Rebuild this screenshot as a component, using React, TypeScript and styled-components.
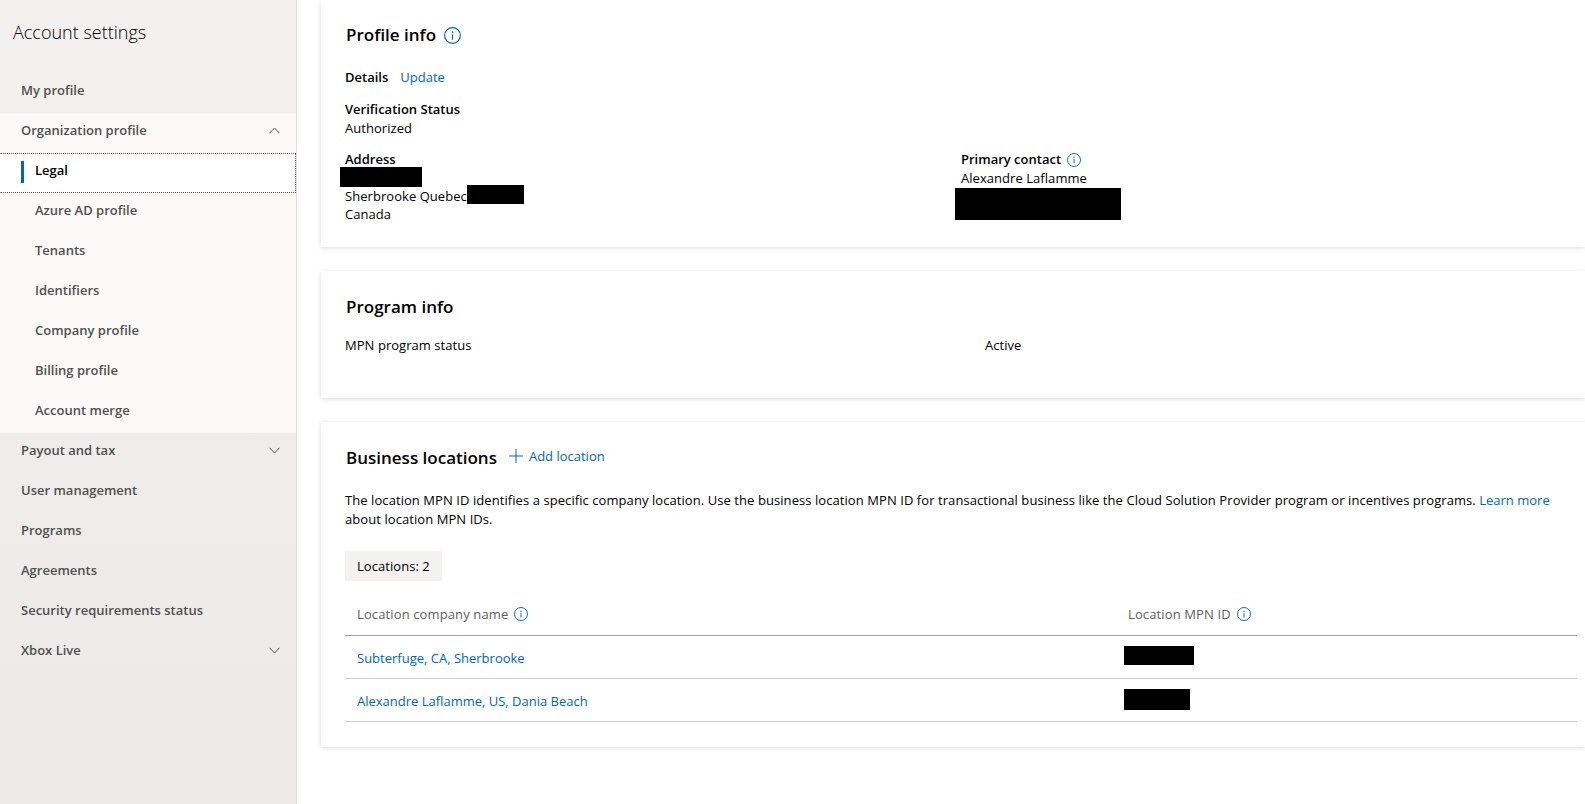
import styled, { createGlobalStyle } from "styled-components";

const GlobalStyle = createGlobalStyle`
  html, body {
    margin: 0;
    padding: 0;
    background: #fff;
    overflow: hidden;
  }
  body {
    font-family: "Open Sans", "Liberation Sans", sans-serif;
    font-size: 13px;
    line-height: 19px;
    letter-spacing: 0.05px;
    color: #000;
  }
`;

const Page = styled.div`
  display: flex;
  height: 804px;
  overflow: hidden;
`;

const Sidebar = styled.nav`
  width: 296px;
  flex-shrink: 0;
  border-right: 1px solid #e1e0df;
  background: linear-gradient(#f2f1f0, #ebeae8);
  letter-spacing: 0;
`;

const SidebarTitle = styled.div`
  height: 73px;
  box-sizing: border-box;
  padding: 20px 0 0 13px;
  font-size: 18px;
  font-weight: 300;
  line-height: 24px;
  color: #000;
`;

const NavGroup = styled.div`
  background: #faf9f8;
`;

const NavItem = styled.div<{ $sub?: boolean; $active?: boolean }>`
  position: relative;
  height: 40px;
  box-sizing: border-box;
  display: flex;
  align-items: center;
  justify-content: space-between;
  padding: 0 16px 6px ${(p) => (p.$sub ? "35px" : "21px")};
  font-weight: 600;
  color: ${(p) => (p.$active ? "#000" : "#505050")};
  background: ${(p) => (p.$active ? "#fff" : "transparent")};
  border: ${(p) => (p.$active ? "1px dotted #555" : "none")};
  ${(p) => p.$active && "padding-left: 34px; border-left-color: transparent;"}
`;

const ActiveBar = styled.span`
  position: absolute;
  left: 20px;
  top: 7px;
  width: 3px;
  height: 22px;
  background: #0067b8;
`;

const Chevron = ({ up }: { up?: boolean }) => (
  <svg width="11" height="7" viewBox="0 0 11 7" fill="none">
    <path
      d={up ? "M0.5 6.2L5.5 1L10.5 6.2" : "M0.5 0.8L5.5 6L10.5 0.8"}
      stroke="#555"
      strokeWidth="1"
    />
  </svg>
);

const Main = styled.main`
  flex: 1;
  min-width: 0;
  padding-left: 24px;
`;

const Card = styled.section<{ $height: number; $top: number }>`
  height: ${(p) => p.$height}px;
  box-sizing: border-box;
  margin-bottom: 24px;
  padding: ${(p) => p.$top}px 8px 0 24px;
  background: #fff;
  box-shadow: 0 1px 5px rgba(0, 0, 0, 0.13);
`;

const TitleRow = styled.div`
  display: flex;
  align-items: center;
`;

const CardTitle = styled.h2`
  margin: 0;
  padding-left: 1px;
  font-size: 17px;
  font-weight: 600;
  line-height: 24px;
  letter-spacing: 0;
  color: #000;
`;

const Link = styled.a`
  color: #0067b8;
  text-decoration: none;
  letter-spacing: 0;
`;

const InfoMark = styled.svg<{ $left: number }>`
  margin-left: ${(p) => p.$left}px;
  flex-shrink: 0;
`;

const InfoIcon = ({ size = 14, left = 6 }: { size?: number; left?: number }) => (
  <InfoMark $left={left} width={size} height={size} viewBox="0 0 16 16" fill="none">
    <circle cx="8" cy="8" r="7.4" stroke="#0067b8" strokeWidth="1.1" />
    <path d="M8 7V12" stroke="#0067b8" strokeWidth="1.1" />
    <circle cx="8" cy="4.8" r="0.8" fill="#0067b8" />
  </InfoMark>
);

const DetailsRow = styled.div`
  display: flex;
  gap: 12px;
  margin-top: 21px;
`;

const Strong = styled.div`
  font-weight: 600;
  letter-spacing: 0;
  color: #000;
`;

const Columns = styled.div`
  display: grid;
  grid-template-columns: 616px 1fr;
`;

const Block = styled.div<{ $top: number }>`
  margin-top: ${(p) => p.$top}px;
`;

const LabelRow = styled.div`
  display: flex;
  align-items: center;
`;

const Redacted = styled.div<{ $w: number; $h: number; $left: number; $up?: number }>`
  width: ${(p) => p.$w}px;
  height: ${(p) => p.$h}px;
  margin-left: ${(p) => p.$left}px;
  margin-top: ${(p) => p.$up ?? 0}px;
  background: #000;
`;

const InlineRow = styled.div`
  display: flex;
  align-items: flex-start;
  height: 18px;
`;

const ProgramRow = styled.div`
  display: grid;
  grid-template-columns: 640px 1fr;
  margin-top: 17px;
`;

const AddButton = styled(Link)`
  display: flex;
  align-items: center;
  margin: 0 0 4px 12px;
  gap: 6px;
`;

const Paragraph = styled.p`
  margin: 21px 0 0;
  line-height: 18.67px;
  letter-spacing: 0.07px;
  color: #000;
`;

const CountChip = styled.div`
  width: 97px;
  height: 30px;
  box-sizing: border-box;
  margin-top: 23px;
  padding-left: 12px;
  display: flex;
  align-items: center;
  background: #f3f2f1;
`;

const Table = styled.div`
  margin-top: 12px;
`;

const TableRow = styled.div<{ $head?: boolean }>`
  display: grid;
  grid-template-columns: 771px 1fr;
  height: 43px;
  box-sizing: border-box;
  align-items: center;
  border-bottom: 1px solid ${(p) => (p.$head ? "#a3a3a3" : "#d0d0d0")};
`;

const HeadCell = styled.div`
  display: flex;
  align-items: center;
  padding-left: 12px;
  letter-spacing: 0.12px;
  color: #605e5c;
`;

const BodyCell = styled.div`
  padding: 2px 0 0 12px;
`;

const RedactedCell = styled.div`
  display: flex;
  align-items: center;
`;

const topItems = ["My profile"];
const subItems = [
  "Azure AD profile",
  "Tenants",
  "Identifiers",
  "Company profile",
  "Billing profile",
  "Account merge",
];

const App = () => {
  return (
    <>
      <GlobalStyle />
      <Page>
        <Sidebar>
          <SidebarTitle>Account settings</SidebarTitle>
          {topItems.map((item) => (
            <NavItem key={item}>{item}</NavItem>
          ))}
          <NavGroup>
            <NavItem>
              Organization profile
              <Chevron up />
            </NavItem>
            <NavItem $sub $active>
              <ActiveBar />
              Legal
            </NavItem>
            {subItems.map((item) => (
              <NavItem $sub key={item}>
                {item}
              </NavItem>
            ))}
          </NavGroup>
          <NavItem>
            Payout and tax
            <Chevron />
          </NavItem>
          <NavItem>User management</NavItem>
          <NavItem>Programs</NavItem>
          <NavItem>Agreements</NavItem>
          <NavItem>Security requirements status</NavItem>
          <NavItem>
            Xbox Live
            <Chevron />
          </NavItem>
        </Sidebar>
        <Main>
          <Card $height={247} $top={23}>
            <TitleRow>
              <CardTitle>Profile info</CardTitle>
              <InfoIcon size={17} left={8} />
            </TitleRow>
            <DetailsRow>
              <Strong>Details</Strong>
              <Link>Update</Link>
            </DetailsRow>
            <Block $top={13}>
              <Strong>Verification Status</Strong>
              <div>Authorized</div>
            </Block>
            <Columns>
              <Block $top={12}>
                <Strong>Address</Strong>
                <Redacted $w={82} $h={20} $left={-5} $up={-2} />
                <InlineRow>
                  <span>Sherbrooke Quebec</span>
                  <Redacted $w={57} $h={19} $left={0} $up={-2} />
                </InlineRow>
                <div>Canada</div>
              </Block>
              <Block $top={12}>
                <LabelRow>
                  <Strong>Primary contact</Strong>
                  <InfoIcon />
                </LabelRow>
                <div>Alexandre Laflamme</div>
                <Redacted $w={166} $h={32} $left={-6} />
              </Block>
            </Columns>
          </Card>
          <Card $height={127} $top={24}>
            <CardTitle>Program info</CardTitle>
            <ProgramRow>
              <div>MPN program status</div>
              <div>Active</div>
            </ProgramRow>
          </Card>
          <Card $height={325} $top={24}>
            <TitleRow>
              <CardTitle>Business locations</CardTitle>
              <AddButton>
                <svg width="14" height="14" viewBox="0 0 14 14" fill="none">
                  <path d="M7 0V14M0 7H14" stroke="#0067b8" strokeWidth="1" />
                </svg>
                Add location
              </AddButton>
            </TitleRow>
            <Paragraph>
              The location MPN ID identifies a specific company location. Use the business
              location MPN ID for transactional business like the Cloud Solution Provider
              program or incentives programs. <Link>Learn more</Link> about location MPN IDs.
            </Paragraph>
            <CountChip>Locations: 2</CountChip>
            <Table>
              <TableRow $head>
                <HeadCell>
                  Location company name
                  <InfoIcon />
                </HeadCell>
                <HeadCell>
                  Location MPN ID
                  <InfoIcon />
                </HeadCell>
              </TableRow>
              <TableRow>
                <BodyCell>
                  <Link>Subterfuge, CA, Sherbrooke</Link>
                </BodyCell>
                <RedactedCell>
                  <Redacted $w={70} $h={19} $left={8} $up={-4} />
                </RedactedCell>
              </TableRow>
              <TableRow>
                <BodyCell>
                  <Link>Alexandre Laflamme, US, Dania Beach</Link>
                </BodyCell>
                <RedactedCell>
                  <Redacted $w={66} $h={21} $left={8} $up={-2} />
                </RedactedCell>
              </TableRow>
            </Table>
          </Card>
        </Main>
      </Page>
    </>
  );
};

export default App;
